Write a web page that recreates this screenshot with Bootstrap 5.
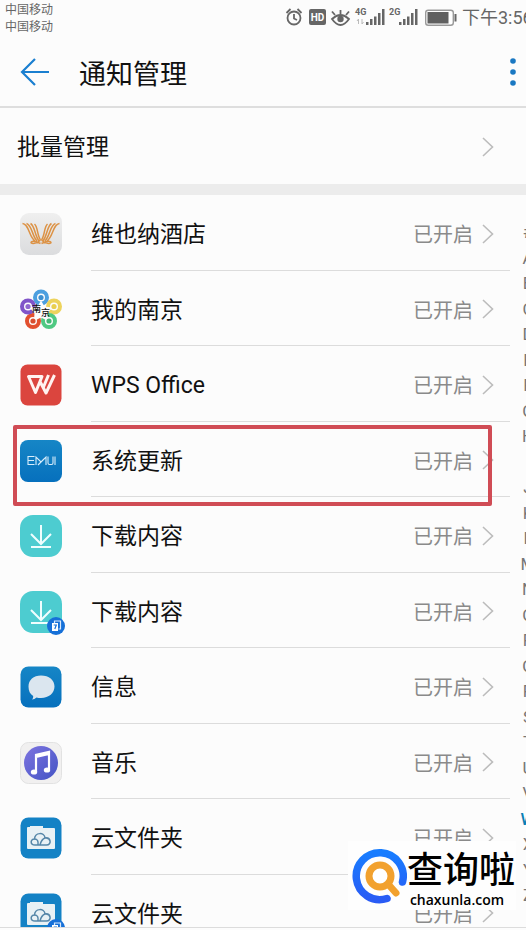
<!DOCTYPE html>
<html lang="zh-CN">
<head>
<meta charset="utf-8">
<meta name="viewport" content="width=device-width, initial-scale=1">
<title>通知管理</title>
<link href="https://cdn.jsdelivr.net/npm/bootstrap@5.3.0/dist/css/bootstrap.min.css" rel="stylesheet">
<style>
  body { font-family: Roboto, "Noto Sans CJK SC", sans-serif; background: #fcfcfc; color: #111; }
  .status-bar { height: 36px; color: #666; padding-left: 5px; }
  .carriers { font-size: 12px; line-height: 17px; padding-top: 2px; }
  .status-icons { height: 36px; width: 241px; gap: 1px; }
  .clock-text { font-size: 18px; line-height: 24px; }
  .app-header { height: 72px; border-bottom: 2px solid #dedede; padding: 2px 0 0 20px; }
  .page-title { font-size: 27px; line-height: 40px; margin-left: 29px; padding-top: 5px; }
  .label-text { font-size: 23px; line-height: 32px; padding-top: 3px; }
  .batch-row { height: 76px; padding: 1px 31px 0 17px; }
  .section-gap { height: 11px; background: #ececec; }
  .app-row { height: 76px; padding: 2px 0 0 20px; }
  .app-row:nth-child(even) { height: 75px; }
  .app-link { border-bottom: 1px solid #dcdcdc; margin-left: 29px; padding-right: 15px; }
  .state-text { font-size: 20px; line-height: 28px; color: #8a8a8a; margin-right: 8px; padding-top: 3px; }
  .highlight-frame { position: absolute; left: 13px; right: 18px; top: 3px; bottom: -9px; border: 4px solid #d04c55; border-radius: 2px; pointer-events: none; z-index: 2; }
  .index-col { width: 16px; padding: 27px 0 16px; }
  .index-nav { width: 36px; font-size: 17px; line-height: 20px; }
  .index-nav a { color: #777; }
  .index-nav a.current { color: #0a7fb5; font-weight: 500; }
  .bottom-edge { height: 3px; border-top: 1px solid #dcdcdc; }
  .site-mark { position: absolute; right: 10px; bottom: 20px; width: 168px; height: 69px; background: #fefefe; color: #000; z-index: 3; }
  .mark-name { font-size: 36px; line-height: 42px; font-weight: 500; padding-top: 6px; }
  .mark-site { font-family: "Open Sans", "Noto Sans", sans-serif; font-size: 14px; line-height: 16px; font-weight: 600; padding-right: 8px; }
</style>
<script src="https://cdn.jsdelivr.net/npm/bootstrap@5.3.0/dist/js/bootstrap.bundle.min.js"></script>
</head>
<body class="vh-100 overflow-hidden d-flex flex-column position-relative">

<svg class="position-absolute" width="0" height="0" aria-hidden="true">
  <defs>
    <linearGradient id="gPale" x2="0" y2="1"><stop stop-color="#efefef"/><stop offset="1" stop-color="#dbdcde"/></linearGradient>
    <linearGradient id="gBlue" x2="0" y2="1"><stop stop-color="#1686c6"/><stop offset="1" stop-color="#0670bd"/></linearGradient>
    <linearGradient id="gNote" x2="1" y2="1"><stop stop-color="#7e74e0"/><stop offset="1" stop-color="#4353c4"/></linearGradient>
    <linearGradient id="gRing" x2="0" y2="1"><stop stop-color="#187dff"/><stop offset="1" stop-color="#2a5cf5"/></linearGradient>
    <symbol id="chevron" viewBox="0 0 14 22"><path d="M2 2l9.500 9L2 20" fill="none" stroke="#bcbcbc" stroke-width="1.600"/></symbol>
    <symbol id="download" viewBox="0 0 42 42"><rect width="42" height="42" rx="13" fill="#4dccd0"/><path d="M21 10v19M11 19l10 10 10-10M11 32h20" fill="none" stroke="#effefe" stroke-width="2"/></symbol>
    <symbol id="cloudfolder" viewBox="0 0 42 42"><rect x=".5" y=".5" width="41" height="41" rx="8" fill="#1482c5"/><path d="M7 11q0-1 1-1h2V9h13v2h11q1 0 1 1v19q0 1-1 1H8q-1 0-1-1z" fill="#e8f1f5"/><g fill="none" stroke="#5586a8" stroke-width="1.500"><path d="M15 28c-5 0-5-6-.5-6 .500-7 10-7 10.500-1 6-1 7 7 1.500 7z"/><path d="M14.500 22c3 0 4 2 3.500 6M25 21c-3 1-4 3-5 7"/></g></symbol>
    <symbol id="clonebadge" viewBox="0 0 18 18"><circle cx="9" cy="9" r="9" fill="#1670d8"/><path d="M7.500 6V4h6v8h-2" fill="none" stroke="#d8e8fc" stroke-width="1.200"/><rect x="5" y="6" width="6" height="8" fill="#fff"/><path d="M6.700 8h2.600L7.800 12" fill="none" stroke="#1670d8" stroke-width="1.200"/></symbol>
  </defs>
</svg>

<div class="status-bar d-flex justify-content-between flex-shrink-0 overflow-hidden">
  <div class="carriers"><div>中国移动</div><div>中国移动</div></div>
  <div class="status-icons d-flex align-items-center flex-shrink-0">
    <svg class="flex-shrink-0" width="176" height="24" viewBox="0 0 176 24" role="img" aria-label="闹钟 HD 护眼 4G 2G 电池">
      <g fill="none" stroke="#666" stroke-width="1.800"><circle cx="9" cy="12" r="6.500"/><path d="M9 8v4.500l3 1.500M1.500 7l4-4M12.500 3l4 4"/></g>
      <rect x="24" y="3" width="17" height="16" rx="2" fill="#666"/>
      <text x="32.500" y="15" text-anchor="middle" font-size="10" font-weight="700" fill="#fff">HD</text>
      <g fill="none" stroke="#666" stroke-width="1.800"><path d="M47 13q8.500-8 17 0-8.500 12-17 0zM55.500 8V4M50 9l-3-3.500M61 9l3-3.500"/></g><circle cx="55.500" cy="13" r="3.200" fill="#666"/>
      <g font-size="9" font-weight="700" fill="#666"><text x="70" y="9">4G</text><text x="104" y="9">2G</text></g>
      <path d="M73.500 18v-5m-1.500 2l1.500-2M77 13v5m1.500-2L77 18" fill="none" stroke="#bbb"/>
      <path id="bars" d="M81 16h2.500v3H81zM85 13h2.500v6H85zM89 10.500h2.500V19H89zM93 7h2.500v12H93zM97 3h2.500v16H97z" fill="#666"/>
      <use href="#bars" x="33"/>
      <rect x="140.700" y="4.200" width="27.600" height="15" rx="2.500" fill="#fff" stroke="#999" stroke-width="1.400"/><rect x="142.500" y="6" width="21" height="11.500" fill="#606060"/><path d="M170.500 8v7.500" stroke="#666" stroke-width="2"/>
    </svg>
    <span class="clock-text text-nowrap">下午3:56</span>
  </div>
</div>

<header class="app-header d-flex align-items-center flex-shrink-0">
  <button type="button" class="btn p-0 border-0 d-flex" aria-label="返回"><svg width="30" height="30" viewBox="0 0 30 30"><path d="M29 15H2M15 2L2 15l13 13" fill="none" stroke="#1a7fd0" stroke-width="2.200"/></svg></button>
  <h1 class="page-title fw-normal mb-0">通知管理</h1>
  <button type="button" class="btn p-0 border-0 d-flex ms-auto me-2" aria-label="更多"><svg width="10" height="30" viewBox="0 0 10 30" fill="#1a78c2"><circle cx="5" cy="4" r="2.800"/><circle cx="5" cy="15" r="2.800"/><circle cx="5" cy="26" r="2.800"/></svg></button>
</header>

<a href="#batch" class="batch-row d-flex align-items-center justify-content-between flex-shrink-0 text-reset text-decoration-none">
  <span class="label-text">批量管理</span><svg width="14" height="22"><use href="#chevron"/></svg>
</a>
<div class="section-gap flex-shrink-0"></div>

<main class="d-flex flex-grow-1 overflow-hidden">
  <ul class="list-unstyled mb-0 flex-grow-1">
    <li class="app-row d-flex align-items-center">
      <svg width="42" height="42" viewBox="0 0 42 42"><rect width="42" height="42" rx="9" fill="url(#gPale)"/><g fill="none" stroke="#dc9245" stroke-width="1.500"><path id="wing" d="M2.500 10.500C9 11 9 24 15 28M6.500 10.500C12 12 12 23 17 28M10.500 10.500C15 13 14.500 22 19 28M14.500 11C18 14 17 22 20.500 27M20.500 27C17 31 11 31 11 29.500S15 27.500 20.500 30.500"/><use href="#wing" transform="matrix(-1 0 0 1 42 0)"/></g></svg>
      <a href="#app1" class="app-link h-100 d-flex align-items-center flex-grow-1 text-reset text-decoration-none"><span class="label-text me-auto">维也纳酒店</span><span class="state-text">已开启</span><svg width="14" height="22"><use href="#chevron"/></svg></a>
    </li>
    <li class="app-row d-flex align-items-center">
      <svg width="42" height="42" viewBox="0 0 42 42"><g fill="none" stroke-width="4"><circle cx="21" cy="8.500" r="6" stroke="#4c9fdf"/><circle cx="34" cy="17.500" r="6" stroke="#edd35c"/><circle cx="29" cy="32" r="6" stroke="#4fc982"/><circle cx="13" cy="32" r="6" stroke="#e2502f"/><circle cx="8" cy="17.500" r="6" stroke="#8054c9"/></g><path d="M21 11.500l3.500 6 8 1-5 5.500.5 8-7-3.500-7 3.500.5-8-5-5.500 8-1z" fill="#fcfcfc"/><circle cx="21" cy="8.500" r="2.600" fill="#3d8fd0"/><circle cx="34" cy="17.500" r="2.600" fill="#e9cf4e"/><circle cx="29" cy="32" r="2.600" fill="#42b875"/><circle cx="13" cy="32" r="2.600" fill="#d84d2e"/><circle cx="8" cy="17.500" r="2.600" fill="#9067cf"/><g font-size="9" font-weight="500" fill="#111"><text x="12" y="23">南</text><text x="21" y="27">京</text></g></svg>
      <a href="#app2" class="app-link h-100 d-flex align-items-center flex-grow-1 text-reset text-decoration-none"><span class="label-text me-auto">我的南京</span><span class="state-text">已开启</span><svg width="14" height="22"><use href="#chevron"/></svg></a>
    </li>
    <li class="app-row d-flex align-items-center">
      <svg width="42" height="42" viewBox="0 0 42 42"><rect x=".5" y=".5" width="41" height="41" rx="7" fill="#db453e"/><path d="M8.500 12.500H22L15.500 28.500zM20 17.500L26 29 34.500 11M28.500 11L23.500 23" fill="none" stroke="#fff3f0" stroke-width="3" stroke-linejoin="round"/></svg>
      <a href="#app3" class="app-link h-100 d-flex align-items-center flex-grow-1 text-reset text-decoration-none"><span class="label-text me-auto">WPS Office</span><span class="state-text">已开启</span><svg width="14" height="22"><use href="#chevron"/></svg></a>
    </li>
    <li class="app-row d-flex align-items-center position-relative">
      <svg width="42" height="42" viewBox="0 0 42 42"><rect width="42" height="42" rx="8" fill="url(#gBlue)"/><path d="M14.500 16.500H8v8h6.500M8 20.500h6M16 25v-8l5 5 5-5v8M18 25l6-6M28 16.500V23q0 1.500 1.500 1.500h2Q33 24.500 33 23v-6.500M35 16.500v8.500" fill="none" stroke="#d8edfb" stroke-width="1.100"/></svg>
      <a href="#app4" class="app-link h-100 d-flex align-items-center flex-grow-1 text-reset text-decoration-none"><span class="label-text me-auto">系统更新</span><span class="state-text">已开启</span><svg width="14" height="22"><use href="#chevron"/></svg></a>
      <div class="highlight-frame"></div>
    </li>
    <li class="app-row d-flex align-items-center">
      <svg width="42" height="42"><use href="#download"/></svg>
      <a href="#app5" class="app-link h-100 d-flex align-items-center flex-grow-1 text-reset text-decoration-none"><span class="label-text me-auto">下载内容</span><span class="state-text">已开启</span><svg width="14" height="22"><use href="#chevron"/></svg></a>
    </li>
    <li class="app-row d-flex align-items-center">
      <svg class="overflow-visible" width="42" height="42"><use href="#download"/><use href="#clonebadge" x="27" y="26" width="18" height="18"/></svg>
      <a href="#app6" class="app-link h-100 d-flex align-items-center flex-grow-1 text-reset text-decoration-none"><span class="label-text me-auto">下载内容</span><span class="state-text">已开启</span><svg width="14" height="22"><use href="#chevron"/></svg></a>
    </li>
    <li class="app-row d-flex align-items-center">
      <svg width="42" height="42" viewBox="0 0 42 42"><rect x=".5" y=".5" width="41" height="41" rx="8" fill="url(#gBlue)"/><path d="M21 9.500c8 0 13.500 4.500 13.500 11S29 32 21 32q-2.500 0-4.500-.500-2 2-4.500 2 1.500-1.500 1.200-3.500C10 28 8.500 25 8.500 20.500c0-6.500 5-11 12.500-11z" fill="#dbe6ef"/></svg>
      <a href="#app7" class="app-link h-100 d-flex align-items-center flex-grow-1 text-reset text-decoration-none"><span class="label-text me-auto">信息</span><span class="state-text">已开启</span><svg width="14" height="22"><use href="#chevron"/></svg></a>
    </li>
    <li class="app-row d-flex align-items-center">
      <svg width="42" height="42" viewBox="0 0 42 42"><rect x=".5" y=".5" width="41" height="41" rx="8" fill="#f1f0f0" stroke="#e2e2e2"/><circle cx="21" cy="21" r="17" fill="url(#gNote)"/><path d="M16 30V13l13-3v17M16 15l13-3" fill="none" stroke="#fff" stroke-width="2.200"/><ellipse cx="14" cy="30" rx="3.200" ry="2.600" fill="#fff"/><ellipse cx="27" cy="28" rx="3.200" ry="2.600" fill="#fff"/></svg>
      <a href="#app8" class="app-link h-100 d-flex align-items-center flex-grow-1 text-reset text-decoration-none"><span class="label-text me-auto">音乐</span><span class="state-text">已开启</span><svg width="14" height="22"><use href="#chevron"/></svg></a>
    </li>
    <li class="app-row d-flex align-items-center">
      <svg width="42" height="42"><use href="#cloudfolder"/></svg>
      <a href="#app9" class="app-link h-100 d-flex align-items-center flex-grow-1 text-reset text-decoration-none"><span class="label-text me-auto">云文件夹</span><span class="state-text">已开启</span><svg width="14" height="22"><use href="#chevron"/></svg></a>
    </li>
    <li class="app-row d-flex align-items-center">
      <svg class="overflow-visible" width="42" height="42"><use href="#cloudfolder"/><use href="#clonebadge" x="27" y="26" width="18" height="18"/></svg>
      <a href="#app10" class="app-link h-100 d-flex align-items-center flex-grow-1 text-reset text-decoration-none"><span class="label-text me-auto">云文件夹</span><span class="state-text">已开启</span><svg width="14" height="22"><use href="#chevron"/></svg></a>
    </li>
  </ul>
  <div class="index-col flex-shrink-0">
    <nav class="index-nav nav flex-column flex-nowrap h-100 text-center" aria-label="字母索引">
      <a class="flex-fill text-decoration-none" href="#i0">#</a><a class="flex-fill text-decoration-none" href="#iA">A</a><a class="flex-fill text-decoration-none" href="#iB">B</a><a class="flex-fill text-decoration-none" href="#iC">C</a><a class="flex-fill text-decoration-none" href="#iD">D</a><a class="flex-fill text-decoration-none" href="#iE">E</a><a class="flex-fill text-decoration-none" href="#iF">F</a><a class="flex-fill text-decoration-none" href="#iG">G</a><a class="flex-fill text-decoration-none" href="#iH">H</a><a class="flex-fill text-decoration-none" href="#iI">I</a><a class="flex-fill text-decoration-none" href="#iJ">J</a><a class="flex-fill text-decoration-none" href="#iK">K</a><a class="flex-fill text-decoration-none" href="#iL">L</a><a class="flex-fill text-decoration-none" href="#iM">M</a><a class="flex-fill text-decoration-none" href="#iN">N</a><a class="flex-fill text-decoration-none" href="#iO">O</a><a class="flex-fill text-decoration-none" href="#iP">P</a><a class="flex-fill text-decoration-none" href="#iQ">Q</a><a class="flex-fill text-decoration-none" href="#iR">R</a><a class="flex-fill text-decoration-none" href="#iS">S</a><a class="flex-fill text-decoration-none" href="#iT">T</a><a class="flex-fill text-decoration-none" href="#iU">U</a><a class="flex-fill text-decoration-none" href="#iV">V</a><a class="flex-fill text-decoration-none current" href="#iW">W</a><a class="flex-fill text-decoration-none" href="#iX">X</a><a class="flex-fill text-decoration-none" href="#iY">Y</a><a class="flex-fill text-decoration-none" href="#iZ">Z</a>
    </nav>
  </div>
</main>
<div class="bottom-edge flex-shrink-0"></div>

<div class="site-mark d-flex align-items-center">
  <svg class="flex-shrink-0 ms-1" width="55" height="56" viewBox="0 0 55 56"><path d="M35 50.500A23.500 23.500 0 1 1 50.500 34" fill="none" stroke="url(#gRing)" stroke-width="7.500" stroke-linecap="round"/><path d="M36 36l8 9" stroke="#f2a12e" stroke-width="7" stroke-linecap="round"/><circle cx="28" cy="28" r="11" fill="#fff" stroke="#f2a12e" stroke-width="7"/></svg>
  <div class="text-center text-nowrap"><div class="mark-name">查询啦</div><div class="mark-site">chaxunla.com</div></div>
</div>
</body>
</html>
